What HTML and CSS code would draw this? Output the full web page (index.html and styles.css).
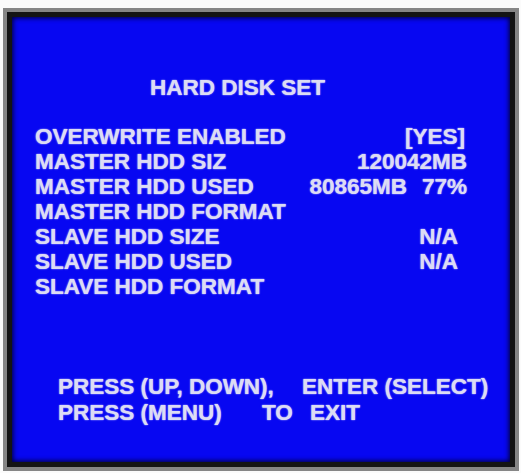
FILE: index.html
```html
<!DOCTYPE html>
<html lang="en">
<head>
    <meta charset="UTF-8">
    <meta name="viewport" content="width=device-width, initial-scale=1.0">
    <title>Hard Disk Set</title>
    <link rel="stylesheet" href="styles.css">
</head>
<body>
    <div class="monitor">
        <div class="screen">
            <h1 class="title">HARD DISK SET</h1>

            <div class="menu">
                <div class="row">
                    <span>OVERWRITE ENABLED</span>
                    <span class="value value-yes">[YES]</span>
                </div>
                <div class="row">
                    <span>MASTER HDD SIZ</span>
                    <span class="value">120042MB</span>
                </div>
                <div class="row">
                    <span>MASTER HDD USED</span>
                    <span class="value">
                        <span class="used">80865MB</span>
                        <span>77%</span>
                    </span>
                </div>
                <div class="row">
                    <span>MASTER HDD FORMAT</span>
                </div>
                <div class="row">
                    <span>SLAVE HDD SIZE</span>
                    <span class="value value-na">N/A</span>
                </div>
                <div class="row">
                    <span>SLAVE HDD USED</span>
                    <span class="value value-na">N/A</span>
                </div>
                <div class="row">
                    <span>SLAVE HDD FORMAT</span>
                </div>
            </div>

            <div class="help">
                <div class="help-line">
                    <span class="col-keys">PRESS (UP, DOWN),</span>
                    <span>ENTER (SELECT)</span>
                </div>
                <div class="help-line">
                    <span class="col-menu">PRESS (MENU)</span>
                    <span class="col-to">TO</span>
                    <span>EXIT</span>
                </div>
            </div>
        </div>
    </div>
</body>
</html>
```

FILE: styles.css
```css
* {
    margin: 0;
    padding: 0;
    box-sizing: border-box;
}

body {
    background: #fbfbfb;
    padding: 8px 2px 0 3px;
    font-family: 'Liberation Sans', Arial, sans-serif;
}

.monitor {
    width: 516px;
    height: 463px;
    border: 4px solid #868686;
    display: flex;
}

.screen {
    flex: 1;
    min-width: 0;
    border: 5px solid #141414;
    background: #0707f2;
    box-shadow: inset 0 0 5px 1px #000030;
    color: #dcdcf4;
    font-size: 22.5px;
    font-weight: bold;
    line-height: 25px;
    text-shadow: 0 0 1px #c0c0ff, 0 0 2px rgba(200, 200, 255, 0.6);
    padding: 58px 43px 0 23px;
}

.title {
    font-size: 22.5px;
    line-height: 25px;
    padding-left: 115px;
    margin-bottom: 24px;
}

.row {
    display: flex;
    height: 25px;
    white-space: nowrap;
}

.value {
    margin-left: auto;
    display: flex;
}

.value-yes {
    margin-right: 2px;
}

.value-na {
    margin-right: 9px;
}

.used {
    margin-right: 15px;
}

.help {
    margin-top: 75px;
    padding-left: 23px;
}

.help-line {
    display: flex;
    height: 26px;
    white-space: nowrap;
}

.col-keys {
    flex: none;
    width: 244px;
}

.col-menu {
    flex: none;
    width: 204px;
}

.col-to {
    flex: none;
    width: 48px;
}
```
